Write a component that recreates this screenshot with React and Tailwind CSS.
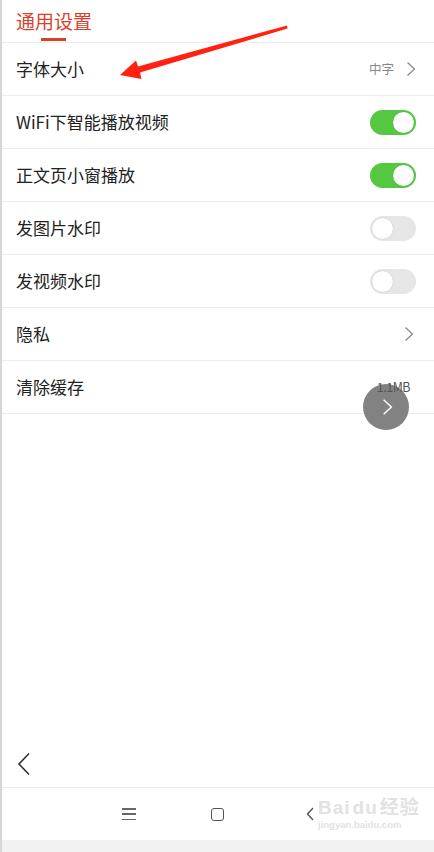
import React from 'react';

const font = { fontFamily: '"Noto Sans CJK SC", "Noto Sans", sans-serif' };

const Chevron = ({ className = '', color = '#8a8a8a' }) => (
  <svg className={className} viewBox="0 0 10 16" fill="none">
    <path d="M1.5 1.5 L8.5 8 L1.5 14.5" stroke={color} strokeWidth="1.3" />
  </svg>
);

const Toggle = ({ on }) => (
  <div
    className={`flex h-[25px] w-[46px] items-center rounded-full px-[2px] ${
      on ? 'justify-end bg-[#55c841]' : 'justify-start bg-[#e6e6e6]'
    }`}
  >
    <div className="h-[21px] w-[21px] rounded-full bg-white shadow-[0_0_1px_rgba(0,0,0,0.25)]" />
  </div>
);

const rows = [
  { label: '字体大小', type: 'value', value: '中字' },
  { label: 'WiFi下智能播放视频', type: 'toggle', on: true },
  { label: '正文页小窗播放', type: 'toggle', on: true },
  { label: '发图片水印', type: 'toggle', on: false },
  { label: '发视频水印', type: 'toggle', on: false },
  { label: '隐私', type: 'link' },
  { label: '清除缓存', type: 'cache', value: '1.1MB' },
];

export default function App() {
  return (
    <div className="relative flex h-[852px] w-[434px] flex-col overflow-hidden border-l-2 border-[#d6d6d6] bg-white" style={font}>
      {/* header */}
      <div className="relative h-[43px] border-b border-[#ececec] pl-[14px]">
        <div className="pt-[7px] text-[19px] leading-[27px] text-[#d9402b]">通用设置</div>
        <div className="absolute left-[39px] top-[38px] h-[3px] w-[25px] bg-[#d9402b]" />
      </div>

      {/* settings list */}
      {rows.map((row) => (
        <div key={row.label} className="flex h-[53px] items-center justify-between border-b border-[#ececec] pl-[14px] pr-[18px]">
          <span className="text-[17px] text-[#222]">{row.label}</span>
          {row.type === 'value' && (
            <div className="flex items-center gap-[12px]">
              <span className="text-[12.5px] text-[#888]">{row.value}</span>
              <Chevron className="h-[16px] w-[10px]" />
            </div>
          )}
          {row.type === 'toggle' && <Toggle on={row.on} />}
          {row.type === 'link' && <Chevron className="mr-[2px] h-[16px] w-[10px]" />}
          {row.type === 'cache' && (
            <span className="relative z-10 mr-[6px] text-[12.5px] tracking-[-0.5px] text-[#555]">{row.value}</span>
          )}
        </div>
      ))}

      <div className="flex-1" />

      {/* back */}
      <div className="flex h-[47px] items-center border-b border-[#ececec] pl-[15px]">
        <svg className="h-[24px] w-[14px]" viewBox="0 0 14 24" fill="none">
          <path d="M12 1.5 L2 12 L12 22.5" stroke="#333" strokeWidth="1.6" />
        </svg>
      </div>

      {/* system nav bar */}
      <div className="relative flex h-[52px] items-center">
        <div className="flex w-full items-center">
          <div className="ml-[120px] flex h-[12px] w-[14px] flex-col justify-between">
            <div className="h-[1.5px] bg-[#666]" />
            <div className="h-[1.5px] bg-[#666]" />
            <div className="h-[1.5px] bg-[#666]" />
          </div>
          <div className="ml-[75px] h-[13px] w-[13px] rounded-[3px] border-[1.5px] border-[#555]" />
          <svg className="ml-[82px] h-[14px] w-[8px]" viewBox="0 0 8 14" fill="none">
            <path d="M7 1 L1.5 7 L7 13" stroke="#555" strokeWidth="1.4" />
          </svg>
        </div>
        <div className="absolute left-[316px] top-[10px] flex flex-col leading-none text-[#e2e2e2]">
          <span className="text-[19px] font-bold tracking-[1px]" style={{ fontFamily: '"Liberation Sans", "Noto Sans CJK SC", sans-serif' }}>Bai<span className="mx-[2px]">du</span>经验</span>
          <span className="mt-[3px] text-[9.5px] font-bold" style={{ fontFamily: '"Liberation Sans", sans-serif' }}>jingyan.baidu.com</span>
        </div>
      </div>
      <div className="h-[12px] bg-[#f2f2f2]" />

      {/* annotation arrow */}
      <svg className="pointer-events-none absolute left-0 top-0 h-[852px] w-[434px]" viewBox="0 0 434 852">
        <polygon points="118,75 134,60.5 136,66.5 285,25.5 285.5,28.5 138,72.5 139.5,79" fill="#ff2212" />
      </svg>

      {/* floating button */}
      <div className="absolute left-[361px] top-[384px] flex h-[46px] w-[46px] items-center justify-center rounded-full bg-[#7b7b7b]/95">
        <Chevron className="ml-[2px] h-[20px] w-[11px]" color="#fff" />
      </div>
    </div>
  );
}
